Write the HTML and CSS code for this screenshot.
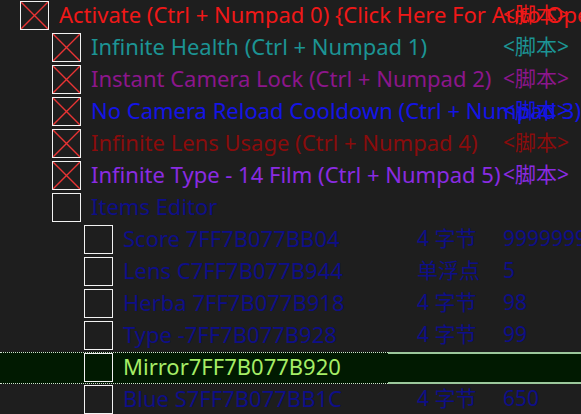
FILE: index.html
```html
<!DOCTYPE html>
<html lang="zh-CN">
<head>
    <meta charset="UTF-8">
    <meta name="viewport" content="width=device-width, initial-scale=1.0">
    <title>Cheat Table</title>
    <link rel="stylesheet" href="styles.css">
</head>
<body>
    <div class="table">
        <div class="row lv0 red">
            <div class="desc"><span class="box"><svg viewBox="0 0 27 27"><path d="M0 0L27 27M27 0L0 27"/></svg></span><span class="label">Activate (Ctrl + Numpad 0) {Click Here For Auto Open}</span></div>
            <div class="type"></div>
            <div class="value">&lt;脚本&gt;</div>
        </div>
        <div class="row lv1 teal">
            <div class="desc"><span class="box"><svg viewBox="0 0 27 27"><path d="M0 0L27 27M27 0L0 27"/></svg></span><span class="label">Infinite Health (Ctrl + Numpad 1)</span></div>
            <div class="type"></div>
            <div class="value">&lt;脚本&gt;</div>
        </div>
        <div class="row lv1 purple">
            <div class="desc"><span class="box"><svg viewBox="0 0 27 27"><path d="M0 0L27 27M27 0L0 27"/></svg></span><span class="label">Instant Camera Lock (Ctrl + Numpad 2)</span></div>
            <div class="type"></div>
            <div class="value">&lt;脚本&gt;</div>
        </div>
        <div class="row lv1 blue">
            <div class="desc"><span class="box"><svg viewBox="0 0 27 27"><path d="M0 0L27 27M27 0L0 27"/></svg></span><span class="label">No Camera Reload Cooldown (Ctrl + Numpad 3)</span></div>
            <div class="type"></div>
            <div class="value">&lt;脚本&gt;</div>
        </div>
        <div class="row lv1 darkred">
            <div class="desc"><span class="box"><svg viewBox="0 0 27 27"><path d="M0 0L27 27M27 0L0 27"/></svg></span><span class="label">Infinite Lens Usage (Ctrl + Numpad 4)</span></div>
            <div class="type"></div>
            <div class="value">&lt;脚本&gt;</div>
        </div>
        <div class="row lv1 violet">
            <div class="desc"><span class="box"><svg viewBox="0 0 27 27"><path d="M0 0L27 27M27 0L0 27"/></svg></span><span class="label">Infinite Type - 14 Film (Ctrl + Numpad 5)</span></div>
            <div class="type"></div>
            <div class="value">&lt;脚本&gt;</div>
        </div>
        <div class="row lv1 navy">
            <div class="desc"><span class="box"></span><span class="label">Items Editor</span></div>
            <div class="type"></div>
            <div class="value"></div>
        </div>
        <div class="row lv2 navy">
            <div class="desc"><span class="box"></span><span class="label">Score 7FF7B077BB04</span></div>
            <div class="type">4 字节</div>
            <div class="value">99999999</div>
        </div>
        <div class="row lv2 navy">
            <div class="desc"><span class="box"></span><span class="label">Lens C7FF7B077B944</span></div>
            <div class="type">单浮点</div>
            <div class="value">5</div>
        </div>
        <div class="row lv2 navy">
            <div class="desc"><span class="box"></span><span class="label">Herba 7FF7B077B918</span></div>
            <div class="type">4 字节</div>
            <div class="value">98</div>
        </div>
        <div class="row lv2 navy">
            <div class="desc"><span class="box"></span><span class="label">Type -7FF7B077B928</span></div>
            <div class="type">4 字节</div>
            <div class="value">99</div>
        </div>
        <div class="row lv2 selected">
            <div class="desc"><span class="box"></span><span class="label">Mirror7FF7B077B920</span></div>
            <div class="type"></div>
            <div class="value"></div>
        </div>
        <div class="row lv2 navy">
            <div class="desc"><span class="box"></span><span class="label">Blue S7FF7B077BB1C</span></div>
            <div class="type">4 字节</div>
            <div class="value">650</div>
        </div>
    </div>
</body>
</html>
```
FILE: styles.css
```css
body {
    margin: 0;
    background-color: #1e1e1e;
    font-family: 'Noto Sans', 'Noto Sans CJK SC', sans-serif;
    font-size: 22px;
    width: 581px;
    height: 414px;
    overflow: hidden;
}

.table {
    display: flex;
    flex-direction: column;
}

.row {
    display: grid;
    grid-template-columns: 417px 86px 1fr;
    height: 32px;
    line-height: 28px;
    white-space: nowrap;
    position: relative;
}

.desc {
    display: flex;
    align-items: center;
    gap: 10px;
    min-width: 0;
    padding-left: 20px;
}

.label {
    align-self: flex-start;
}

.lv1 .desc {
    padding-left: 52px;
}

.lv2 .desc {
    padding-left: 84px;
}

.type,
.value {
    font-size: 21px;
}

.box {
    flex: none;
    display: flex;
    width: 27px;
    height: 27px;
    border: 1.5px solid #f2f2f2;
    margin-top: -1px;
}

.box svg {
    width: 27px;
    height: 27px;
}

.box path {
    stroke: #e83434;
    stroke-width: 1.4;
    fill: none;
}

.red { color: #f01818; }
.teal { color: #1c9494; }
.purple { color: #8c168c; }
.blue { color: #1414e6; }
.darkred { color: #8a0c0c; }
.violet { color: #8a2be2; }
.navy { color: #0e0e88; }

.selected {
    background-color: #011a01;
    color: #a6ee66;
}

.selected::before {
    content: "";
    position: absolute;
    left: 0;
    top: 0;
    bottom: 0;
    width: 388px;
    border-top: 1px dotted #d0e0d0;
    border-bottom: 1px dotted #d0e0d0;
}

.selected::after {
    content: "";
    position: absolute;
    left: 388px;
    right: 0;
    top: 0;
    bottom: 0;
    border-top: 2px solid #9cc89c;
    border-bottom: 2px solid #9cc89c;
}
```
